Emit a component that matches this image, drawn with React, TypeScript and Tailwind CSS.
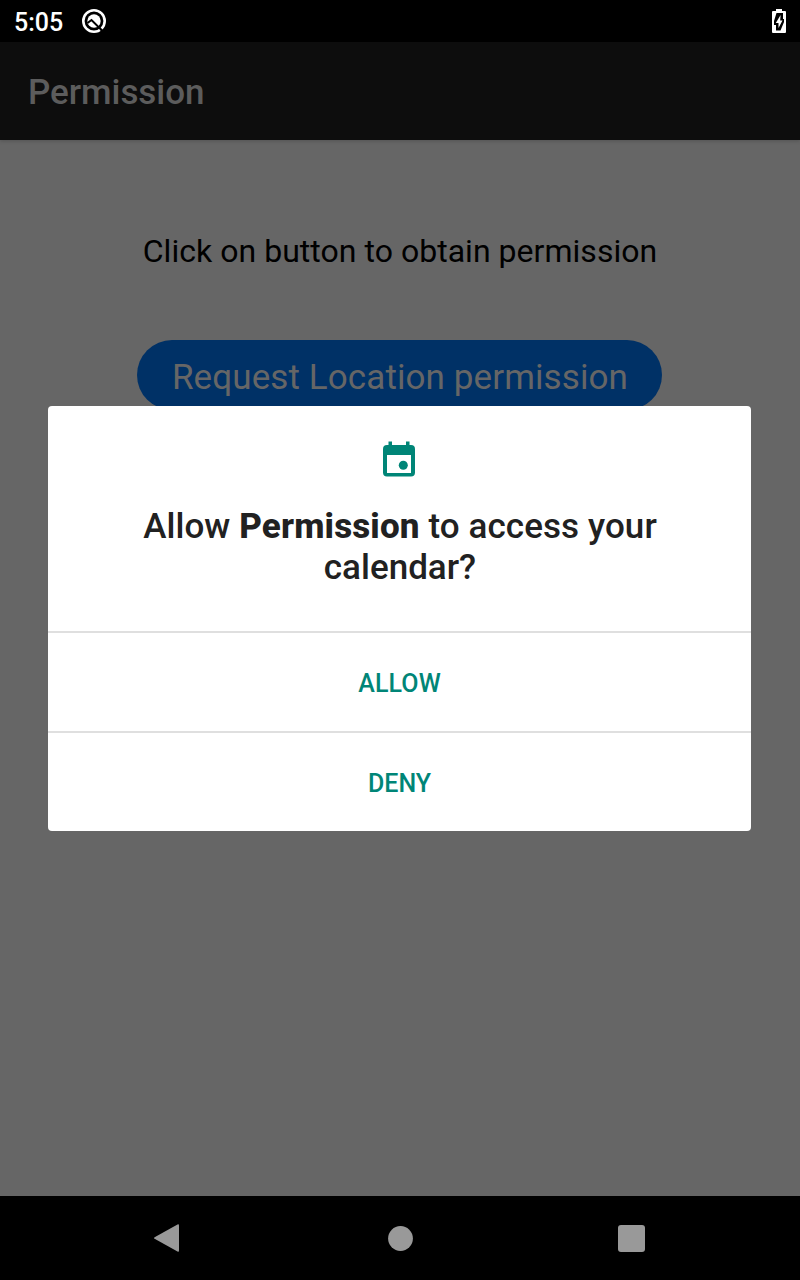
export default function App() {
  return (
    <div className="relative flex h-[1280px] w-[800px] flex-col overflow-hidden bg-[#666666] font-['Roboto',sans-serif]">
      <header className="flex h-[42px] shrink-0 items-center bg-black pr-[14px] pl-[14px] text-white">
        <span className="pt-[4px] text-[25px] leading-[38px] font-medium">5:05</span>
        <svg className="ml-[19px] h-6 w-6" viewBox="0 0 24 24">
          <circle cx="12" cy="12" r="10.7" fill="none" stroke="#fff" strokeWidth="2.600" />
          <circle cx="12" cy="12" r="6.700" fill="#fff" />
          <path d="m5.500 14 4-3 10 10" fill="none" stroke="#000" strokeWidth="2" />
          <path d="m18.800 20.200 2 2" stroke="#000" strokeWidth="2" />
        </svg>
        <svg className="mb-[1px] ml-auto h-6 w-[14px]" viewBox="0 0 14 24">
          <path fill="#fff" d="M4 0h6v2h3q1 0 1 1v20q0 1-1 1H1q-1 0-1-1V3q0-1 1-1h3z" />
          <path fill="#000" d="M4.500 4H11v6h1v3L8.500 21.500H4V16H2v-4z" />
          <path fill="#fff" d="M8.600 6 3.800 14H6.500v5l4-7.500H8.200z" />
        </svg>
      </header>
      <div className="flex h-[98px] shrink-0 items-center bg-[#0d0d0d] pt-1 pl-7 text-[35px] font-medium tracking-[-0.05px] text-[#5c5c5c] shadow-[0_1px_4px_rgba(0,0,0,0.2)]">Permission</div>
      <main className="flex flex-1 flex-col items-center">
        <p className="mt-[90px] text-[32px] leading-[42px] tracking-[0.03px] whitespace-nowrap text-black">Click on button to obtain permission</p>
        <button className="mt-[68px] mr-[1px] h-[70px] w-[525px] rounded-full bg-[#003166] pt-[6px] pl-[1px] text-[35px] tracking-[0.1px] whitespace-nowrap text-[#666666]">Request Location permission</button>
      </main>
      <nav className="flex h-[84px] shrink-0 items-center bg-black pt-[1px] pr-[155px] pl-[154px]">
        <svg className="mb-[1px] h-[28px] w-[25px]" viewBox="0 0 25 28"><path fill="#999" d="M.6 13.200 23.500.4Q25-.3 25 1.400v25.200q0 1.700-1.500 1L.6 14.800q-1.200-.8 0-1.600" /></svg>
        <svg className="ml-[209px] h-[25px] w-[25px]" viewBox="0 0 25 25"><circle cx="12.5" cy="12.5" r="12.4" fill="#999" /></svg>
        <span className="ml-auto h-[27px] w-[27px] rounded-[3px] bg-[#999]" />
      </nav>
      <section role="dialog" className="absolute top-[406px] left-[48px] flex h-[425px] w-[703px] flex-col items-center rounded-[4px] bg-white text-[#008577]">
        <svg className="mt-[35px] mr-[1px] h-9 w-8" viewBox="0 0 32 36" fill="currentColor">
          <path fillRule="evenodd" d="M5.500.5H9V4h14V.5h3.500V4H28q4 0 4 4v23.500q0 4-4 4H4q-4 0-4-4V8q0-4 4-4h1.500zM4 14v18h24V14z" />
          <circle cx="20.3" cy="24.2" r="4.500" />
        </svg>
        <h1 className="mt-[29px] pl-[1px] text-center text-[35px] leading-[41px] font-medium text-[#212121]"><span className="tracking-[0.08px]">Allow <b className="font-extrabold tracking-[0.15px]">Permission</b> to access your</span><br />calendar?</h1>
        <button className="mt-auto h-[100px] w-full border-t-2 border-[#dfdfdf] pt-1 text-[25px] font-medium tracking-[0.1px]">ALLOW</button>
        <button className="h-[100px] w-full border-t-2 border-[#dfdfdf] pt-1 text-[25px] font-medium">DENY</button>
      </section>
    </div>
  );
}
